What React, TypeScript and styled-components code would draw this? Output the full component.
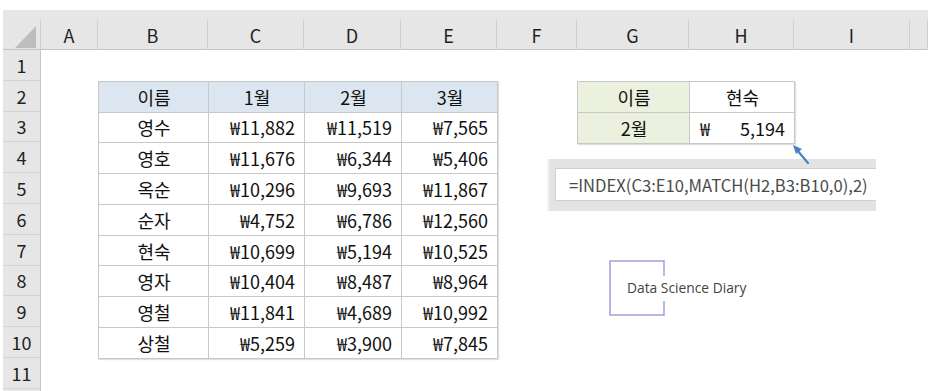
import styled, { createGlobalStyle } from "styled-components";

const GlobalStyle = createGlobalStyle`
  html, body {
    margin: 0;
    padding: 0;
    background: #ffffff;
  }
`;

const FONT = `"Noto Sans CJK KR", "Liberation Sans", sans-serif`;

// sheet column widths (A..I), row header and trailing stub
const COLS = [
  { key: "A", w: 57 },
  { key: "B", w: 110 },
  { key: "C", w: 96 },
  { key: "D", w: 97 },
  { key: "E", w: 96 },
  { key: "F", w: 80 },
  { key: "G", w: 112 },
  { key: "H", w: 105 },
  { key: "I", w: 116 },
];
const ROW_H = 30.8;

const Page = styled.div`
  position: relative;
  width: 947px;
  height: 391px;
  overflow: hidden;
  padding: 10px 0 0 3px;
  box-sizing: border-box;
  font-family: ${FONT};
  color: #111;
`;

const HeaderRow = styled.div`
  display: flex;
  height: 40px;
  width: 925px;
  padding-top: 10px;
  box-sizing: border-box;
  background: #e6e6e6;
  border-bottom: 1px solid #c4c4c4;
`;

const Corner = styled.div`
  position: relative;
  width: 38px;
  height: 30px;
  border-right: 1px solid #cfcfcf;
  box-sizing: border-box;
`;

const CornerTriangle = styled.div`
  position: absolute;
  right: 4px;
  bottom: 2px;
  width: 0;
  height: 0;
  border-left: 21px solid transparent;
  border-bottom: 22px solid #bdbdbd;
`;

const ColHead = styled.div<{ $w: number }>`
  width: ${({ $w }) => $w}px;
  height: 30px;
  border-right: 1px solid #cfcfcf;
  box-sizing: border-box;
  display: flex;
  align-items: center;
  justify-content: center;
  font-size: 18px;
  color: #222;
`;

const Body = styled.div`
  display: flex;
  height: 341px;
`;

const RowHeads = styled.div`
  width: 38px;
  flex: none;
  background: #e6e6e6;
  border-right: 1px solid #c4c4c4;
  box-sizing: border-box;
`;

const RowHead = styled.div`
  height: ${ROW_H}px;
  border-bottom: 1px solid #d2d2d2;
  box-sizing: border-box;
  display: flex;
  align-items: center;
  justify-content: center;
  font-size: 18px;
  color: #222;
`;

const Canvas = styled.div`
  display: grid;
  grid-template-columns: ${COLS.map((c) => `${c.w}px`).join(" ")};
  grid-template-rows: repeat(11, ${ROW_H}px);
`;

const DataTable = styled.div`
  grid-column: 2 / 6;
  grid-row: 2 / 11;
  width: 400px;
  height: 278px;
  display: grid;
  grid-template-columns: 109px 95px 96px 95px;
  grid-template-rows: repeat(9, 1fr);
  gap: 1px;
  padding: 1px;
  box-sizing: border-box;
  background: #c8c8c8;
  box-shadow: 1px 1px 1px rgba(0, 0, 0, 0.12);
`;

const LookupTable = styled.div`
  grid-column: 7 / 9;
  grid-row: 2 / 4;
  width: 218px;
  height: 63px;
  display: grid;
  grid-template-columns: 111px 104px;
  grid-template-rows: 1fr 1fr;
  gap: 1px;
  padding: 1px;
  box-sizing: border-box;
  background: #c8c8c8;
  box-shadow: 1px 1px 1px rgba(0, 0, 0, 0.12);
`;

const Cell = styled.div<{ $fill?: string; $align?: "center" | "right" | "split" }>`
  background: ${({ $fill }) => $fill || "#ffffff"};
  display: flex;
  align-items: center;
  justify-content: ${({ $align }) =>
    $align === "right" ? "flex-end" : $align === "split" ? "space-between" : "center"};
  padding: 0 9px 0 10px;
  font-size: 18px;
  color: #111;
  white-space: nowrap;
  overflow: hidden;
`;

const FormulaBar = styled.div`
  position: absolute;
  left: 547px;
  top: 159px;
  width: 329px;
  height: 52px;
  background: #e3e3e3;
  padding: 9px 0 10px 6px;
  box-sizing: border-box;
  border-left: 2px solid #f4f4f4;
`;

const FormulaInput = styled.div`
  height: 100%;
  background: #ffffff;
  border: 1px solid #d0d0d0;
  border-right: none;
  box-sizing: border-box;
  display: flex;
  align-items: center;
  padding-left: 13px;
  font-size: 16.6px;
  color: #4a4a4a;
  white-space: nowrap;
`;

const Arrow = styled.svg`
  position: absolute;
  left: 788px;
  top: 140px;
`;

const Logo = styled.div`
  position: absolute;
  left: 609px;
  top: 260px;
  height: 55px;
  display: flex;
  align-items: center;
  padding-left: 18px;
`;

const LogoFrame = styled.svg`
  position: absolute;
  left: 0;
  top: 0;
`;

const LogoText = styled.span`
  position: relative;
  font-family: "Open Sans", "Liberation Sans", sans-serif;
  font-size: 13.8px;
  color: #444;
  white-space: nowrap;
`;

const names = ["영수", "영호", "옥순", "순자", "현숙", "영자", "영철", "상철"];
const values = [
  ["₩11,882", "₩11,519", "₩7,565"],
  ["₩11,676", "₩6,344", "₩5,406"],
  ["₩10,296", "₩9,693", "₩11,867"],
  ["₩4,752", "₩6,786", "₩12,560"],
  ["₩10,699", "₩5,194", "₩10,525"],
  ["₩10,404", "₩8,487", "₩8,964"],
  ["₩11,841", "₩4,689", "₩10,992"],
  ["₩5,259", "₩3,900", "₩7,845"],
];

const HEAD_FILL = "#dce6f1";
const GREEN_FILL = "#ebf1de";

export default function App() {
  return (
    <>
      <GlobalStyle />
      <Page>
        <HeaderRow>
          <Corner>
            <CornerTriangle />
          </Corner>
          {COLS.map((c) => (
            <ColHead key={c.key} $w={c.w}>
              {c.key}
            </ColHead>
          ))}
          <ColHead $w={18} />
        </HeaderRow>
        <Body>
          <RowHeads>
            {Array.from({ length: 11 }, (_, i) => (
              <RowHead key={i}>{i + 1}</RowHead>
            ))}
          </RowHeads>
          <Canvas>
            <DataTable>
              <Cell $fill={HEAD_FILL}>이름</Cell>
              <Cell $fill={HEAD_FILL}>1월</Cell>
              <Cell $fill={HEAD_FILL}>2월</Cell>
              <Cell $fill={HEAD_FILL}>3월</Cell>
              {names.map((n, i) => [
                <Cell key={n}>{n}</Cell>,
                ...values[i].map((v, j) => (
                  <Cell key={`${n}-${j}`} $align="right">
                    {v}
                  </Cell>
                )),
              ])}
            </DataTable>
            <LookupTable>
              <Cell $fill={GREEN_FILL}>이름</Cell>
              <Cell>현숙</Cell>
              <Cell $fill={GREEN_FILL}>2월</Cell>
              <Cell $align="split">
                <span>₩</span>
                <span>5,194</span>
              </Cell>
            </LookupTable>
          </Canvas>
        </Body>

        <FormulaBar>
          <FormulaInput>=INDEX(C3:E10,MATCH(H2,B3:B10,0),2)</FormulaInput>
        </FormulaBar>

        <Arrow width="26" height="28" viewBox="0 0 26 28">
          <line x1="20" y1="23" x2="9" y2="10" stroke="#4a7fc1" strokeWidth="2.2" strokeLinecap="round" />
          <polygon points="5,5 14,9 8,14" fill="#4a7fc1" />
        </Arrow>

        <Logo>
          <LogoFrame width="57" height="56" viewBox="0 0 57 56">
            <path
              d="M55 16 V1 H1 V55 H55 V41"
              fill="none"
              stroke="#a79ddb"
              strokeWidth="1.5"
            />
          </LogoFrame>
          <LogoText>Data Science Diary</LogoText>
        </Logo>
      </Page>
    </>
  );
}
